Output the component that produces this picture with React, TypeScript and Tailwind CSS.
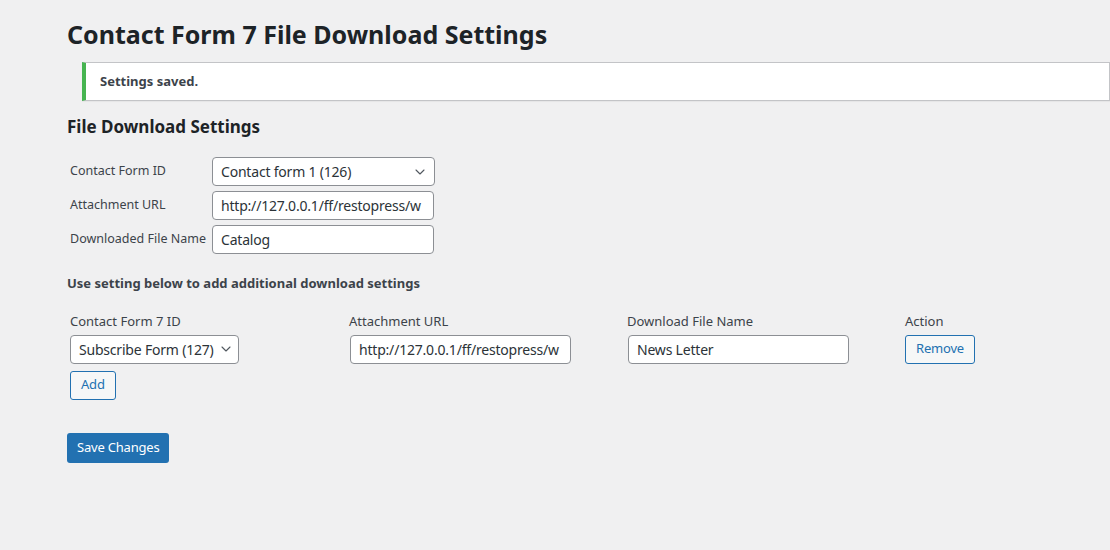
import { ChevronDown } from 'lucide-react'

const font = { fontFamily: '"Noto Sans", "Open Sans", sans-serif' }

function Select({ value, width }: { value: string; width: string }) {
  return (
    <div
      className={`flex h-[29px] ${width} items-center justify-between gap-[4px] rounded-[4px] border border-[#8c8f94] bg-white pl-[8px] pr-[6px] text-[14px] tracking-[-0.2px] text-[#2c3338]`}
    >
      <span className="whitespace-nowrap">{value}</span>
      <ChevronDown size={16} strokeWidth={1.6} className="shrink-0 text-[#50575e]" />
    </div>
  )
}

function Input({ value, width }: { value: string; width: string }) {
  return (
    <div
      className={`flex h-[29px] ${width} items-center overflow-hidden whitespace-nowrap rounded-[4px] border border-[#8c8f94] bg-white px-[8px] text-[14px] tracking-[-0.2px] text-[#2c3338]`}
    >
      {value}
    </div>
  )
}

function OutlineButton({ label }: { label: string }) {
  return (
    <button className="flex h-[29px] items-center rounded-[3px] border border-[#2271b1] bg-[#f6f7f7] px-[10px] text-[13px] tracking-[-0.2px] text-[#2271b1]">
      {label}
    </button>
  )
}

export default function App() {
  return (
    <div style={font} className="min-h-[550px] w-[1110px] overflow-hidden bg-[#f0f0f1] text-[#1d2327]">
      <div className="pl-[67px] pt-[16px]">
        <h1 className="text-[25px] font-bold leading-[36px] text-[#1d2327]">
          Contact Form 7 File Download Settings
        </h1>

        {/* notice */}
        <div className="ml-[15px] mt-[10px] flex h-[39px] items-center border border-l-4 border-[#c3c4c7] border-l-[#46b450] bg-white pl-[14px] shadow-[0_1px_1px_rgba(0,0,0,0.04)]">
          <p className="text-[13px] font-bold text-[#3c434a]">Settings saved.</p>
        </div>

        <h2 className="mt-[14px] text-[17px] font-bold leading-[24px]">File Download Settings</h2>

        <div className="mt-[18px] flex flex-col gap-[5px] pl-[3px] text-[12.5px] text-[#3c434a]">
          <div className="flex items-center">
            <span className="w-[142px] whitespace-nowrap">Contact Form ID</span>
            <Select value="Contact form 1 (126)" width="w-[223px]" />
          </div>
          <div className="flex items-center">
            <span className="w-[142px] whitespace-nowrap">Attachment URL</span>
            <Input value="http://127.0.0.1/ff/restopress/w" width="w-[222px]" />
          </div>
          <div className="flex items-center">
            <span className="w-[142px] whitespace-nowrap">Downloaded File Name</span>
            <Input value="Catalog" width="w-[222px]" />
          </div>
        </div>

        <p className="mt-[20px] text-[13px] font-bold text-[#3c434a]">
          Use setting below to add additional download settings
        </p>

        <div className="mt-[17px] flex pl-[3px] text-[13px] text-[#3c434a]">
          <div className="flex w-[279px] flex-col gap-[4px]">
            <span className="leading-[20px]">Contact Form 7 ID</span>
            <Select value="Subscribe Form (127)" width="w-[169px]" />
            <div className="mt-[3px]">
              <OutlineButton label="Add" />
            </div>
          </div>
          <div className="flex w-[278px] flex-col gap-[4px]">
            <span className="leading-[20px]">Attachment URL</span>
            <div className="pl-[1px]">
              <Input value="http://127.0.0.1/ff/restopress/w" width="w-[221px]" />
            </div>
          </div>
          <div className="flex w-[278px] flex-col gap-[4px]">
            <span className="leading-[20px]">Download File Name</span>
            <div className="pl-[1px]">
              <Input value="News Letter" width="w-[221px]" />
            </div>
          </div>
          <div className="flex flex-col gap-[4px]">
            <span className="leading-[20px]">Action</span>
            <div>
              <OutlineButton label="Remove" />
            </div>
          </div>
        </div>

        <button className="mt-[33px] flex h-[30px] items-center rounded-[3px] bg-[#2271b1] px-[10px] text-[13px] tracking-[-0.2px] text-white">
          Save Changes
        </button>
      </div>
    </div>
  )
}
